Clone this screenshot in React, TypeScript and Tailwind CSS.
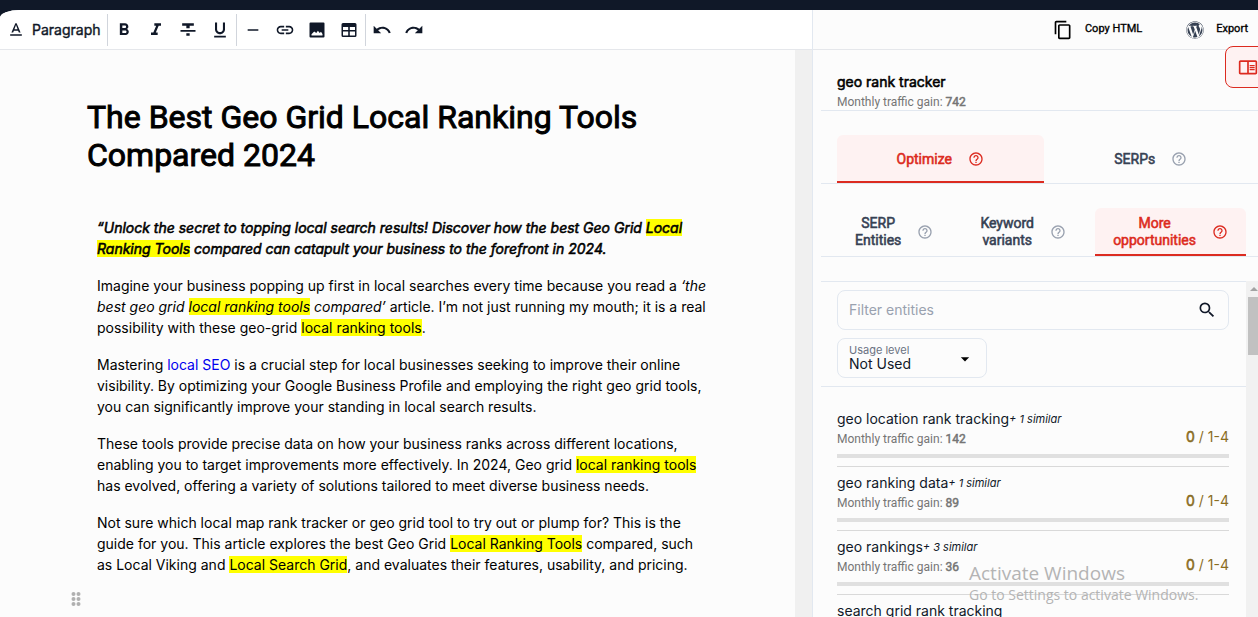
import React from 'react';
import {
  MdArrowDropDown,
  MdContentCopy,
  MdFormatBold,
  MdFormatItalic,
  MdFormatStrikethrough,
  MdFormatUnderlined,
  MdHelpOutline,
  MdHorizontalRule,
  MdLink,
  MdOutlineChromeReaderMode,
  MdRedo,
  MdSearch,
  MdTextFormat,
  MdUndo,
} from 'react-icons/md';
import { FaWordpress } from 'react-icons/fa';

interface Entity {
  name: string;
  similar?: number;
  gain?: number;
}

const entities: Entity[] = [
  { name: 'geo location rank tracking', similar: 1, gain: 142 },
  { name: 'geo ranking data', similar: 1, gain: 89 },
  { name: 'geo rankings', similar: 3, gain: 36 },
  { name: 'search grid rank tracking' },
];

function ImageIcon() {
  return (
    <svg viewBox="0 0 16 16" className="h-4 w-4" fill="currentColor">
      <path
        fillRule="evenodd"
        d="M1.5 0.5h13a1 1 0 0 1 1 1v13a1 1 0 0 1-1 1h-13a1 1 0 0 1-1-1v-13a1 1 0 0 1 1-1zM2.5 13.500h11v-1.500l-1.500-2.200-1.300 1.200L8.900 8.800 7.300 11 5.200 9.400 2.500 12.200z"
      />
    </svg>
  );
}

function TableIcon() {
  return (
    <svg viewBox="0 0 16 16" className="h-4 w-4" fill="currentColor">
      <path
        fillRule="evenodd"
        d="M2 1h12a1.500 1.500 0 0 1 1.500 1.500v11A1.500 1.500 0 0 1 14 15H2A1.500 1.500 0 0 1 .5 13.500v-11A1.500 1.500 0 0 1 2 1zM2 5v3h5.200V5zM8.800 5v3H14V5zM2 9.500v4h5.200v-4zM8.800 9.500v4H14v-4z"
      />
    </svg>
  );
}

function GripIcon() {
  return (
    <svg viewBox="0 0 10 16" className="h-4 w-2.5" fill="currentColor">
      <circle cx="2.500" cy="3" r="2" />
      <circle cx="7.500" cy="3" r="2" />
      <circle cx="2.500" cy="8" r="2" />
      <circle cx="7.500" cy="8" r="2" />
      <circle cx="2.500" cy="13" r="2" />
      <circle cx="7.500" cy="13" r="2" />
    </svg>
  );
}

function ToolButton({ label, children }: { label: string; children: React.ReactNode }) {
  return (
    <button type="button" aria-label={label} className="flex h-8 w-8 items-center justify-center">
      {children}
    </button>
  );
}

function Toolbar() {
  return (
    <div className="flex h-10 items-center border-b border-gray-200 bg-white text-gray-900">
      <button type="button" className="flex h-8 items-center gap-1.5 border-r border-gray-300 pr-1.5 pl-1.5 text-sm [-webkit-text-stroke:0.03em]">
        <MdTextFormat className="h-5 w-5" />
        Paragraph
      </button>
      <div className="flex border-r border-gray-300">
        <ToolButton label="Bold"><MdFormatBold className="h-5 w-5" /></ToolButton>
        <ToolButton label="Italic"><MdFormatItalic className="h-5 w-5" /></ToolButton>
        <ToolButton label="Strikethrough"><MdFormatStrikethrough className="h-5 w-5" /></ToolButton>
        <ToolButton label="Underline"><MdFormatUnderlined className="h-5 w-5" /></ToolButton>
      </div>
      <div className="flex border-r border-gray-300">
        <ToolButton label="Horizontal rule"><MdHorizontalRule className="h-4 w-4" /></ToolButton>
        <ToolButton label="Link"><MdLink className="h-5 w-5" /></ToolButton>
        <ToolButton label="Image"><ImageIcon /></ToolButton>
        <ToolButton label="Table"><TableIcon /></ToolButton>
      </div>
      <ToolButton label="Undo"><MdUndo className="h-5 w-5" /></ToolButton>
      <ToolButton label="Redo"><MdRedo className="h-5 w-5" /></ToolButton>
    </div>
  );
}

function Mark({ children }: { children: React.ReactNode }) {
  return <mark className="bg-[#ffff00] text-black">{children}</mark>;
}

function Article() {
  return (
    <article className="min-w-0 flex-1 overflow-hidden pt-12 pr-[86px] pl-[87px] text-black">
      <h1 className="font-['Roboto',sans-serif] text-[32px] leading-[38px] [-webkit-text-stroke:0.03em]">
        The Best Geo Grid Local Ranking Tools Compared 2024
      </h1>
      <div className="mt-[43px] space-y-4 pl-2.5 text-sm leading-[21px]">
        <p className="italic [-webkit-text-stroke:0.04em]">
          “Unlock the secret to topping local search results! Discover how the best Geo Grid <Mark>Local Ranking Tools</Mark> compared
          can catapult your business to the forefront in 2024.
        </p>
        <p>
          Imagine your business popping up first in local searches every time because you read a{' '}
          <em>‘the best geo grid <Mark>local ranking tools</Mark> compared’</em> article. I’m not just running my mouth; it is a
          real possibility with these geo-grid <Mark>local ranking tools</Mark>.
        </p>
        <p>
          Mastering <a href="#local-seo" className="text-[#0000ee]">local SEO</a> is a crucial step for local businesses seeking to
          improve their online visibility. By optimizing your Google Business Profile and employing the right geo grid tools, you
          can significantly improve your standing in local search results.
        </p>
        <p>
          These tools provide precise data on how your business ranks across different locations, enabling you to target
          improvements more effectively. In 2024, Geo grid <Mark>local ranking tools</Mark> has evolved, offering a variety of
          solutions tailored to meet diverse business needs.
        </p>
        <p>
          Not sure which local map rank tracker or geo grid tool to try out or plump for? This is the guide for you. This article
          explores the best Geo Grid <Mark>Local Ranking Tools</Mark> compared, such as Local Viking and{' '}
          <Mark>Local Search Grid</Mark>, and evaluates their features, usability, and pricing.
        </p>
      </div>
      <button type="button" aria-label="Move block" className="mt-4 -ml-4 block text-[#b0b0b0]">
        <GripIcon />
      </button>
    </article>
  );
}

function MainTab({ label, active }: { label: string; active?: boolean }) {
  return (
    <button
      type="button"
      role="tab"
      aria-selected={!!active}
      className={
        active
          ? 'flex h-12 flex-1 items-center justify-center gap-4 rounded-t-md border-b-2 border-[#dc2b20] bg-[#fef2f2] pt-0.5 text-[#dc2b20]'
          : 'flex h-12 flex-1 items-center justify-center gap-4 text-gray-700'
      }
    >
      <span className="font-['Roboto',sans-serif] text-sm [-webkit-text-stroke:0.04em]">{label}</span>
      <MdHelpOutline className={active ? 'h-4 w-4' : 'h-4 w-4 text-gray-400'} />
    </button>
  );
}

function SubTab({ lines, active }: { lines: [string, string]; active?: boolean }) {
  return (
    <button
      type="button"
      role="tab"
      aria-selected={!!active}
      className={
        active
          ? 'flex h-12 items-center gap-4 rounded-t-md border-b-2 border-[#dc2b20] bg-[#fef2f2] px-[18px] pt-0.5 text-[#dc2b20]'
          : 'flex h-12 items-center gap-4 px-[18px] text-gray-700'
      }
    >
      <span className="font-['Roboto',sans-serif] text-sm leading-[17px] [-webkit-text-stroke:0.04em]">
        {lines[0]}
        <br />
        {lines[1]}
      </span>
      <MdHelpOutline className={active ? 'h-4 w-4' : 'h-4 w-4 text-gray-400'} />
    </button>
  );
}

function EntityRow({ entity }: { entity: Entity }) {
  return (
    <li className="border-b border-[#d9d9d9] pt-1.5 pb-2">
      <div className="flex items-end justify-between">
        <div>
          <p className="flex text-sm leading-5 text-gray-900">
            {entity.name}
            {entity.similar && <em className="text-[11px]">+ {entity.similar} similar</em>}
          </p>
          {entity.gain && (
            <p className="font-['Roboto',sans-serif] text-xs leading-5 text-[#757575]">
              Monthly traffic gain: <span className="[-webkit-text-stroke:0.04em]">{entity.gain}</span>
            </p>
          )}
        </div>
        {entity.gain && (
          <p className="text-sm leading-6 text-[#8a6d1f]">
            <span className="[-webkit-text-stroke:0.04em]">0</span> / 1-4
          </p>
        )}
      </div>
      <div className="mt-[5px] h-1 bg-[#e0e0e0]" />
    </li>
  );
}

function Sidebar() {
  return (
    <aside className="flex w-[446px] shrink-0 flex-col border-l border-slate-200">
      <div className="flex h-10 shrink-0 items-center justify-end border-b border-gray-200 font-['Roboto',sans-serif] text-[11px] text-black [-webkit-text-stroke:0.03em]">
        <button type="button" className="flex items-center gap-3 pr-11">
          <MdContentCopy className="h-5 w-5" />
          Copy HTML
        </button>
        <button type="button" className="flex items-center gap-3 pr-2.5">
          <FaWordpress className="h-[18px] w-[18px] text-gray-700" />
          Export
        </button>
      </div>
      <div className="flex min-h-0 flex-1 flex-col pl-2">
        <div className="border-b border-slate-200 pt-[22px] pl-4">
          <h2 className="text-sm leading-5 text-black [-webkit-text-stroke:0.04em]">geo rank tracker</h2>
          <p className="mt-0.5 font-['Roboto',sans-serif] text-xs leading-4 text-[#757575]">
            Monthly traffic gain: <span className="[-webkit-text-stroke:0.04em]">742</span>
          </p>
        </div>
        <div role="tablist" className="flex gap-1 border-b border-slate-200 pt-6 pr-1 pl-4">
          <MainTab label="Optimize" active />
          <MainTab label="SERPs" />
        </div>
        <div role="tablist" className="flex justify-between border-b border-slate-200 pt-6 pr-3 pl-4">
          <SubTab lines={['SERP', 'Entities']} />
          <SubTab lines={['Keyword', 'variants']} />
          <SubTab lines={['More', 'opportunities']} active />
        </div>
        <div className="mt-6 flex min-h-0 flex-1 overflow-hidden">
          <div className="min-w-0 flex-1">
            <div className="border-y border-slate-200 py-2 pr-[17px] pl-4">
              <label className="flex h-10 items-center rounded-lg border border-slate-200 px-[11px]">
                <input
                  type="text"
                  aria-label="Filter entities"
                  placeholder="Filter entities"
                  className="min-w-0 flex-1 text-sm outline-none placeholder:text-gray-400"
                />
                <MdSearch className="h-5 w-5 text-gray-900" />
              </label>
              <div className="relative mt-2 h-10 w-[150px] rounded-lg border border-slate-200">
                <label htmlFor="usage" className="absolute top-1 left-[11px] text-[11px] leading-[14px] text-gray-500">
                  Usage level
                </label>
                <select id="usage" className="h-full w-full appearance-none pt-3 pl-[11px] text-sm leading-5 text-gray-900 outline-none">
                  <option>Not Used</option>
                </select>
                <MdArrowDropDown className="pointer-events-none absolute top-2.5 right-[11px] h-5 w-5" />
              </div>
            </div>
            <ul className="pt-4 pr-[17px] pl-4">
              {entities.map((entity) => (
                <EntityRow key={entity.name} entity={entity} />
              ))}
            </ul>
          </div>
          {/* scroll track */}
          <div className="w-3 shrink-0 overflow-hidden bg-[#f1f1f1]">
            <div className="flex h-4 w-4 items-center justify-center">
              <div className="border-x-4 border-b-4 border-x-transparent border-b-[#a3a3a3]" />
            </div>
            <div className="ml-0.5 h-[58px] bg-[#c1c1c1]" />
          </div>
        </div>
      </div>
    </aside>
  );
}

export default function App() {
  return (
    <div className="relative flex h-screen flex-col overflow-hidden bg-gray-900 pt-2.5 font-['Inter',sans-serif]">
      <div className="flex min-h-0 flex-1 overflow-hidden bg-[#fcfcfc] [border-top-left-radius:20px_8px]">
        <main className="flex min-w-0 flex-1 flex-col">
          <Toolbar />
          <div className="flex min-h-0 flex-1">
            <Article />
            <div className="w-[17px] shrink-0 bg-[#f0f0f0]" />
          </div>
        </main>
        <Sidebar />
      </div>
      <button
        type="button"
        aria-label="Toggle panel"
        className="absolute top-[46px] -right-3 flex h-[42px] w-[45px] items-center rounded-lg border border-[#dc2b20] bg-[#fef2f2] pl-3 text-[#dc2b20]"
      >
        <MdOutlineChromeReaderMode className="h-5 w-5" />
      </button>
      <div className="pointer-events-none absolute right-[53px] bottom-3 w-[236px] font-['Open_Sans',sans-serif] whitespace-nowrap text-[#b4b4b4]">
        <p className="text-[19px] leading-6">Activate Windows</p>
        <p className="text-sm leading-5">Go to Settings to activate Windows.</p>
      </div>
    </div>
  );
}
